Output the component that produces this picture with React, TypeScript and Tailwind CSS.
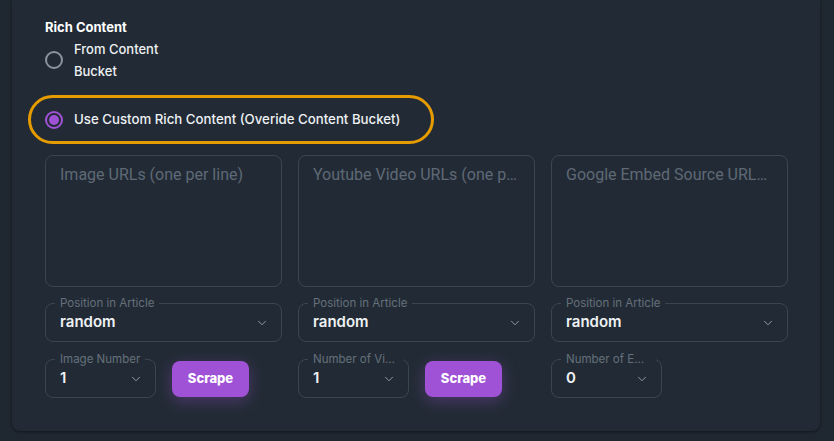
import { ChevronDown } from "lucide-react";

const sans = "font-['Inter','Noto_Sans',sans-serif]";

type OutlinedSelectProps = {
  label: string;
  value: string;
  width: string;
};

function OutlinedSelect({ label, value, width }: OutlinedSelectProps) {
  return (
    <div
      className={`relative h-[39px] ${width} shrink-0 rounded-lg border border-[#3b4550] flex items-center pl-[14px] pr-[12px]`}
    >
      <span className="absolute -top-[9px] left-[9px] max-w-[calc(100%-14px)] truncate bg-[#222b35] px-[5px] text-[11.5px] leading-[16px] text-[#65707b]">
        {label}
      </span>
      <span className="flex-1 text-[15px] font-semibold text-[#eef1f4]">{value}</span>
      <ChevronDown size={14} strokeWidth={1.6} className="text-[#9aa3ad]" />
    </div>
  );
}

function UrlBox({ label }: { label: string }) {
  return (
    <div className="h-[132px] rounded-lg border border-[#3b4550] pl-[14px] pr-[14px] py-[9px]">
      <div className="truncate font-['Roboto',sans-serif] text-[16px] leading-[20px] text-[#5f6975]">
        {label}
      </div>
    </div>
  );
}

function ScrapeButton() {
  return (
    <button className="h-[36px] w-[77px] rounded-lg bg-[#a052d6] text-[13px] font-extrabold text-white shadow-[0_4px_16px_rgba(160,82,214,0.35)]">
      Scrape
    </button>
  );
}

const columns = [
  { url: "Image URLs (one per line)", num: "Image Number", value: "1", scrape: true },
  { url: "Youtube Video URLs (one per line)", num: "Number of Videos", value: "1", scrape: true },
  { url: "Google Embed Source URLs (one per line)", num: "Number of Embeds", value: "0", scrape: false },
];

export default function App() {
  return (
    <div className={`h-[441px] w-full bg-[#1f2730] pl-[12px] pr-[14px] ${sans}`}>
      <div className="h-[431px] rounded-b-lg bg-[#222b35] pl-[33px] pr-[32px] pt-[19px] shadow-[0_1px_3px_rgba(0,0,0,0.45)]">
        <div className="text-[13px] font-bold leading-[16px] text-white">Rich Content</div>

        <label className="mt-[3px] flex items-center gap-[11px]">
          <span className="h-[18px] w-[18px] rounded-full border-2 border-[#8a949e]" />
          <span className="w-[95px] text-[13px] font-medium leading-[22px] text-[#eef1f4]">
            From Content Bucket
          </span>
        </label>

        <div className="-ml-[17px] mt-[13px] flex h-[49px] w-[406px] items-center gap-[11px] rounded-full border-[3px] border-[#e69b00] pl-[14px]">
          <span className="flex h-[18px] w-[18px] items-center justify-center rounded-full border-2 border-[#a052d6]">
            <span className="h-[10px] w-[10px] rounded-full bg-[#a052d6]" />
          </span>
          <span className="text-[13.25px] font-medium text-[#eef1f4]">
            Use Custom Rich Content (Overide Content Bucket)
          </span>
        </div>

        <div className="mt-[11px] grid grid-cols-3 gap-x-[16px]">
          {columns.map((c) => (
            <div key={c.url} className="flex flex-col">
              <UrlBox label={c.url} />
              <div className="mt-[16px]">
                <OutlinedSelect label="Position in Article" value="random" width="w-full" />
              </div>
              <div className="mt-[17px] flex items-center gap-[16px]">
                <OutlinedSelect label={c.num} value={c.value} width="w-[111px]" />
                {c.scrape && <ScrapeButton />}
              </div>
            </div>
          ))}
        </div>
      </div>
    </div>
  );
}
